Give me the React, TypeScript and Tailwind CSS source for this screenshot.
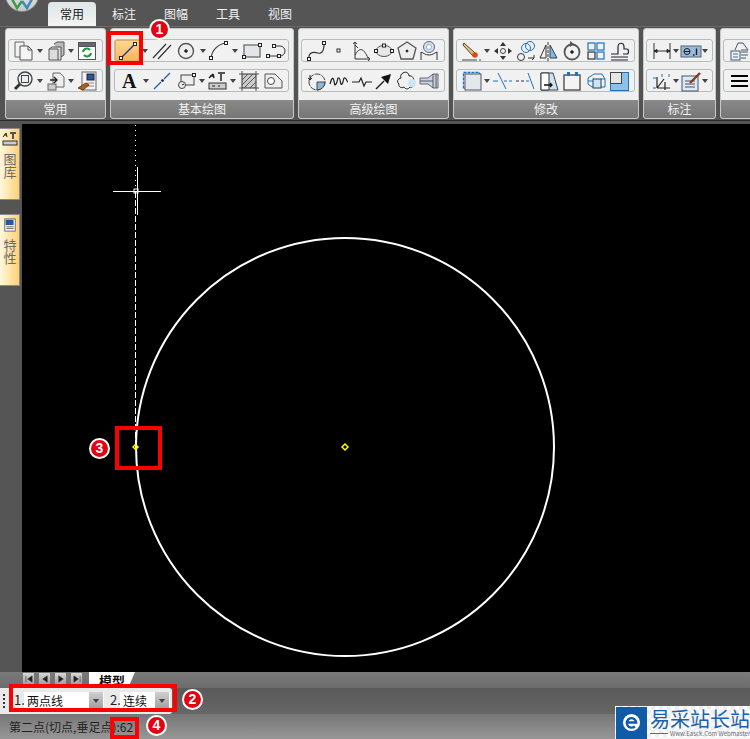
import React from "react";

const K = "#222";
const B = "#1a72c4";
type P = { children: React.ReactNode };
const I = ({ children }: P) => (
  <svg viewBox="0 0 22 22" className="w-[22px] h-[22px] shrink-0" fill="none" stroke={K} strokeWidth="1">
    {children}
  </svg>
);
const A = () => <span className="shrink-0 w-0 h-0 border-x-[3.5px] border-x-transparent border-t-[4px] border-t-[#444]" />;

const sq = (x: number, y: number, s = 3) => <rect x={x - s / 2} y={y - s / 2} width={s} height={s} fill="#fff" stroke={K} />;

const icons = {
  copyPages: <I><path d="M2 2h9v4M2 2v15h5" stroke="#666" /><path d="M7 6h8l4 4v10H7z" fill="#f4f4f4" stroke="#555" /><path d="M15 6v4h4" stroke="#555" /></I>,
  blocks: <I><path d="M9 4l3-2h7v13l-3 2" fill="#bbb" stroke="#555" /><path d="M4 9l3-2h9v13H4z" fill="#ddd" stroke="#555" /><path d="M4 9h9v11" stroke="#555" /></I>,
  refresh: <I><rect x="2.5" y="2.5" width="17" height="17" fill="#fff" stroke="#555" /><rect x="2.5" y="2.5" width="17" height="4" fill="#667" stroke="#555" /><path d="M7 12a4 4 0 017-2M15 13a4 4 0 01-7 2" stroke="#1a9a3a" strokeWidth="2" /></I>,
  zoom: <I><circle cx="12" cy="9" r="7" fill="#e8eef2" stroke="#444" strokeWidth="1.4" /><rect x="8.5" y="5.5" width="7" height="7" stroke="#444" /><path d="M7 14l-5 5" stroke="#333" strokeWidth="3" /></I>,
  paste: <I><path d="M8 3h7l4 4v10H8z" fill="#eee" stroke="#666" /><rect x="3" y="14" width="8" height="6" fill="#ccc" stroke="#666" /><path d="M5 10h7M9 7l3 3-3 3" stroke="#222" strokeWidth="1.4" /></I>,
  brush: <I><rect x="6" y="2" width="14" height="18" fill="#f2f2f2" stroke="#667" /><rect x="11" y="4" width="7" height="6" fill="#27579a" /><path d="M11 13h7M12 16h6" stroke="#888" /><path d="M2 18l8-5 3 2-6 5z" fill="#a8641e" stroke="#6b3b10" /></I>,
  line: <I><path d="M4 18L18 4" stroke="#1f3a8e" strokeWidth="1.500" />{sq(4, 18)}{sq(18, 4)}</I>,
  par: <I><path d="M2 18L15 4M7 19L20 5" stroke="#333" strokeWidth="1.2" /></I>,
  circle: <I><circle cx="11" cy="11" r="7.5" fill="#eee" stroke="#555" strokeWidth="1.4" /><circle cx="11" cy="11" r="1.3" fill="#333" /></I>,
  arc: <I><path d="M3 18C4 10 10 4 18 3" stroke="#444" strokeWidth="1.2" />{sq(3, 18)}{sq(18, 3)}</I>,
  rect: <I><rect x="3" y="5" width="16" height="12" fill="#e2e6ea" stroke="#444" />{sq(3, 17)}{sq(19, 5)}</I>,
  poly: <I><path d="M3 16h12a4.500 4.500 0 000-10h-6" stroke="#333" />{sq(3, 16)}{sq(14, 16)}{sq(9, 6)}</I>,
  text: <I><text x="3" y="18" fontFamily="Liberation Serif" fontWeight="700" fontSize="20" fill="#111" stroke="none">A</text></I>,
  dashline: <I><path d="M3 19l7-7M13 9l6-6" stroke="#1a60b0" strokeWidth="1.3" /><circle cx="11.500" cy="10.500" r="1.300" fill="#111" stroke="none" /></I>,
  insert: <I><rect x="6" y="5" width="13" height="10" fill="#eee" stroke="#444" /><circle cx="7" cy="15" r="3.500" fill="#eee" stroke="#444" /><path d="M7 15l2-1" />{sq(19, 5)}</I>,
  createblk: <I><path d="M3 8l4-4M7 4l1 4M4 6h4" strokeWidth="1.5" /><path d="M12 3h7M15 3v8" stroke="#555" strokeWidth="2" /><rect x="3" y="13" width="17" height="6" fill="#ccc" stroke="#333" /><path d="M6 16h3M12 16h2" /></I>,
  hatch: <I><rect x="4" y="4" width="14" height="14" fill="#ccc" stroke="#333" /><path d="M4 10l6-6M4 15L15 4M6 18L18 6M12 18l6-6M1 4h3M18 4h3M1 18h3M18 18h3M4 1v3M18 1v3M4 18v3M18 18v3" stroke="#555" /></I>,
  region: <I><path d="M3 4h10l7 7v7H3z" fill="#eee" stroke="#555" /><circle cx="9" cy="11" r="3.500" fill="#fff" stroke="#444" /></I>,
  spline: <I><path d="M3 19C2 11 9 12 12 13s6-1 6-9" stroke="#333" strokeWidth="1.2" />{sq(3, 19)}{sq(18, 3)}</I>,
  point: <I><rect x="9" y="9" width="3" height="3" stroke="#333" /></I>,
  axes: <I><path d="M4 19V2M2 4l2-2 2 2M4 19h15M17 17l2 2-2 2M4 5l3 3M4 15C9 6 13 9 17 18" stroke="#333" /></I>,
  ellipse: <I><ellipse cx="11" cy="11" rx="8" ry="5.500" fill="#e6e6e6" stroke="#555" />{sq(3, 11)}{sq(19, 11)}{sq(11, 5.500)}</I>,
  penta: <I><path d="M11 2l9 6-3 11H5L2 8z" fill="#eee" stroke="#555" strokeWidth="1.300" /><circle cx="11" cy="11" r="1" fill="#333" /></I>,
  globe: <I><circle cx="11" cy="7" r="5.500" fill="#cfe2f0" stroke="#667" /><circle cx="11" cy="7" r="2.500" fill="#fff" stroke="#9ac" /><path d="M3 20v-8c3 1 4 3 8 3s5-2 8-3v8" stroke="#333" /></I>,
  pie: <I><circle cx="11" cy="12" r="8" stroke="#444" strokeDasharray="6 1" /><path d="M11 12h8a8 8 0 01-8 8z" fill="#8ab8dc" stroke="#444" /><path d="M4 5v5M2 8l2 2 2-2" /></I>,
  wave: <I><path d="M2 14c2-7 3-7 4-3s0 5 2 3 1-7 3-6 1 8 3 6 1-7 3-6 2 4 3 4" stroke="#222" strokeWidth="1.200" /></I>,
  breakl: <I><path d="M1 12h7l2-4 3 8 2-4h6" stroke="#222" strokeWidth="1.200" /></I>,
  arrowp: <I><path d="M3 19l8-8" stroke="#222" strokeWidth="1.500" /><path d="M18 4l-3 10-7-7z" fill="#111" stroke="none" /></I>,
  cloud: <I><path d="M7 3c3-2 6 0 6 3 3-1 6 3 4 5 3 3 0 7-3 6-2 3-5 2-6 0-3 2-6-1-5-3-3-3-1-5 2-6-1-2 0-4 2-5z" stroke="#222" /><circle cx="16" cy="13" r="4" fill="#cfe6f5" stroke="none" /></I>,
  cyl: <I><path d="M2 8h8l5-4h5v14h-5l-5-4H2z" fill="#cbd5e0" stroke="#667" /><path d="M15 4v14M18 4v14M2 11h13" stroke="#556" /></I>,
  eraser: <I><path d="M3 3l11 10-2 3L2 5z" fill="#e3c48c" stroke="#5a4020" /><circle cx="14" cy="15" r="2.800" fill="#d0501a" stroke="none" /><path d="M1 20h15M18 20h2" stroke="#444" /></I>,
  move: <I><path d="M11 2l3 4H8zM11 20l3-4H8zM2 11l4-3v6zM20 11l-4-3v6z" fill="#333" stroke="none" /><circle cx="11" cy="11" r="2.500" stroke="#444" /></I>,
  copyc: <I><circle cx="15" cy="6" r="4.500" stroke={B} /><circle cx="11" cy="8" r="4.500" stroke={B} /><circle cx="6" cy="17" r="3.500" stroke="#333" /><path d="M13 18h6v-3M17 20l2-2" stroke="#333" /></I>,
  mirror: <I><path d="M2 18L8 5v13z" stroke="#333" /><path d="M12 5l7 13h-7z" fill="#8ab8dc" stroke="#245" /><path d="M10 2v19" stroke="#333" strokeDasharray="3 1" /></I>,
  rotate: <I><circle cx="11" cy="12" r="7.500" stroke="#555" strokeWidth="1.800" /><circle cx="11" cy="12" r="1.300" fill="#222" /><path d="M9 1l4 3-4 3z" fill="#555" stroke="none" /></I>,
  array: <I><g stroke={B} strokeWidth="1.200"><rect x="3" y="3" width="7" height="7" /><rect x="12" y="3" width="7" height="7" /></g><g stroke="#333" strokeWidth="1.200"><rect x="3" y="12" width="7" height="7" /><rect x="12" y="12" width="7" height="7" stroke={B} /></g></I>,
  stamp: <I><path d="M3 14h7V7c0-5 6-5 6 0v2h3c2 0 2 5 0 5h-4M3 17h17M3 20h17" stroke="#223" strokeWidth="1.200" /></I>,
  offsetr: <I><rect x="2.500" y="2.500" width="16" height="16" stroke={B} strokeWidth="1.300" strokeDasharray="3 1" /><rect x="4" y="4" width="16" height="16" fill="#e4e8ec" stroke="#556" /></I>,
  trim: <I><path d="M1 11h5M12 11h3M17 11h3" stroke={B} /><path d="M6 3l8 16" stroke={B} /></I>,
  extend: <I><path d="M1 11h3M6 11h3" stroke="#333" /><path d="M11 11h3" stroke={B} /><path d="M13 3l6 16" stroke={B} /></I>,
  stretch: <I><path d="M3 3h12l5 17H3z" fill="#cfe2f2" stroke="#345" /><path d="M3 3h8v17H3z" fill="#fff" stroke="#333" /><path d="M6 15h8M12 13l2 2-2 2" stroke="#111" strokeWidth="1.300" /></I>,
  topdots: <I><rect x="3" y="5" width="16" height="15" fill="#f4f4f4" stroke="#444" strokeWidth="1.300" /><rect x="6" y="2" width="3" height="4" fill={B} stroke="none" /><rect x="14" y="2" width="3" height="4" fill={B} stroke="none" /></I>,
  box3d: <I><path d="M3 8l6-4h8l3 5v8H7L3 14z" stroke={B} /><rect x="8" y="9" width="8" height="9" fill="#cfe2f2" stroke="#245" /><path d="M3 11h5M16 9h4" stroke={B} /></I>,
  offsets: <I><rect x="2.500" y="2.500" width="18" height="18" fill="#8fc0e6" stroke={B} /><rect x="2.500" y="2.500" width="11" height="11" fill="#e6e6e6" stroke="#444" /></I>,
  dim: <I><path d="M3 3v16M19 3v16M3 11h16" stroke="#333" /><path d="M3 11l3-1.500v3zM19 11l-3-1.500v3z" fill="#333" /></I>,
  dimval: <I><rect x="1" y="6" width="20" height="11" fill="#9db8d4" stroke="#567" /><circle cx="7" cy="11.500" r="3" stroke="#123" /><path d="M4 11.500h6" stroke="#123" /><path d="M13 15h1.500M16.500 8.500V15" stroke="#123" strokeWidth="1.400" /></I>,
  ordin: <I><path d="M6 18h13M6 18V7M6 18l7-9M14 12v8" stroke="#222" strokeWidth="1.200" /><path d="M2 8h3M2 18h3M11 4v3M18 4v3" stroke={B} /></I>,
  note: <I><rect x="2" y="6" width="16" height="15" fill="#dfe8f2" stroke="#456" /><path d="M5 11h10M5 14h10M5 17h10" stroke="#456" /><path d="M10 13L20 3" stroke="#8a3a16" strokeWidth="2.400" /></I>,
  layers: <I><rect x="3" y="11" width="9" height="9" fill="#f4f4f4" stroke="#456" /><path d="M5 14h5M5 17h5" stroke={B} /><path d="M7 10l3-7h5l5 7h-7" stroke="#456" /><path d="M13 12h7M13 15h7M13 18h5" stroke="#456" /></I>,
  lines: <I><path d="M3 6h17M3 11h17M3 16h17" stroke="#000" strokeWidth="2.200" /></I>,
};

const Group = ({ children, hot }: P & { hot?: boolean }) => (
  <div className={`h-[23px] flex items-center justify-between border border-[#b5bcbc] rounded-[3px] bg-[#f1f1f1] ${hot ? "pl-0 pr-[1px]" : "px-[4px]"}`}>{children}</div>
);

const Panel = ({ w, label, rows }: { w: string; label: string; rows: React.ReactNode[] }) => (
  <section className={`${w} shrink-0 h-[91px] flex flex-col bg-[#efefef] border border-[#c8c8c8] rounded-[3px] overflow-hidden`}>
    <div className="flex-1 flex flex-col pt-[10px] gap-[7px] px-[2px]">{rows}</div>
    <div className="h-[18px] bg-gradient-to-b from-[#8a8a8a] to-[#767676] text-[12px] leading-[18px] text-center text-[#f2f2f2]">{label}</div>
  </section>
);

const Hot = () => (
  <div className="w-[25px] h-[21px] flex items-center justify-center bg-gradient-to-b from-[#ffd890] to-[#fbb45c] border border-[#e0b060] shrink-0">{icons.line}</div>
);

const Badge = ({ n, c }: { n: string; c: string }) => (
  <div className={`absolute ${c} w-[21px] h-[21px] rounded-full bg-[#e60012] border-[2px] border-white text-white text-[14px] font-bold leading-[17px] text-center font-['Liberation_Sans',sans-serif]`}>{n}</div>
);

const NavBtn = ({ d }: { d: string }) => (
  <div className="w-[13px] h-[13px] bg-gradient-to-b from-[#d8d8d8] to-[#a0a0a0] border border-[#777] flex items-center justify-center">
    <svg viewBox="0 0 9 9" className="w-[8px] h-[8px]"><path d={d} fill="#222" stroke="#222" strokeWidth=".6" /></svg>
  </div>
);

const Sel = ({ t, w }: { t: string; w: string }) => (
  <div className={`${w} h-[18px] bg-white flex items-center justify-between pr-[1px]`}>
    <span className="pl-[3px] text-[12px] text-[#111]">{t}</span>
    <span className="w-[14px] h-[18px] bg-gradient-to-b from-[#d0d0d0] to-[#9c9c9c] flex items-center justify-center">
      <span className="w-0 h-0 border-x-[3.500px] border-x-transparent border-t-[4px] border-t-[#444]" />
    </span>
  </div>
);

const Side = ({ label, icon, mt }: { label: string; icon: React.ReactNode; mt: string }) => (
  <div className={`${mt} w-[20px] h-[72px] border border-[#8a8a8a] border-l-0 bg-gradient-to-r from-[#fff8dc] to-[#ffd070] flex flex-col items-center pt-[2px] gap-[6px]`}>
    {icon}
    <span className="[writing-mode:vertical-rl] text-[13px] leading-[14px] text-[#6b6b6b]">{label}</span>
  </div>
);

export default function App() {
  return (
    <div className="relative w-[750px] h-[739px] overflow-hidden flex flex-col bg-[#555] font-['Noto_Sans_CJK_SC','Liberation_Sans',sans-serif]">
      {/* Tabs */}
      <header className="h-[26px] shrink-0 bg-[#555] flex items-end relative">
        <div className="absolute left-[5px] -top-[22px] w-[34px] h-[34px] rounded-full bg-gradient-to-b from-[#f4f4f4] to-[#c8c8c8] border border-[#888] flex items-end justify-center overflow-hidden">
          <svg viewBox="0 0 24 12" className="w-[24px] h-[12px] mb-[1px]">
            <path d="M2 1l5 9 5-7" fill="none" stroke="#3a9a4a" strokeWidth="2.500" />
            <path d="M12 3l5 7 5-9" fill="none" stroke="#3a8ac0" strokeWidth="2.500" />
          </svg>
        </div>
        <div className="ml-[48px] w-[48px] h-[24px] rounded-t-[4px] bg-gradient-to-b from-[#dfe6e8] to-[#f3f3f3] text-[12px] leading-[24px] text-center text-[#222]">常用</div>
        <nav className="flex ml-[16px] gap-[28px] h-[24px] text-[12px] leading-[24px] text-[#f0f0f0]">
          <span>标注</span><span>图幅</span><span>工具</span><span>视图</span>
        </nav>
      </header>

      {/* Ribbon */}
      <div className="h-[94px] shrink-0 bg-[#535353] border-t border-[#6a6a6a] flex gap-[4px] pl-[5px] pt-[1px]">
        <Panel w="w-[101px]" label="常用" rows={[
          <Group key="a">{icons.copyPages}<A />{icons.blocks}<A />{icons.refresh}</Group>,
          <Group key="b">{icons.zoom}<A />{icons.paste}<A />{icons.brush}</Group>,
        ]} />
        <Panel w="w-[184px]" label="基本绘图" rows={[
          <div key="a" className="pl-[1px] pr-[2px]"><Group hot><Hot /><A />{icons.par}{icons.circle}<A />{icons.arc}<A />{icons.rect}{icons.poly}</Group></div>,
          <div key="b" className="pl-[1px] pr-[2px]"><Group>{icons.text}<A />{icons.dashline}{icons.insert}<A />{icons.createblk}<A />{icons.hatch}{icons.region}</Group></div>,
        ]} />
        <Panel w="w-[151px]" label="高级绘图" rows={[
          <div key="a" className="pr-[1px]"><Group>{icons.spline}{icons.point}{icons.axes}{icons.ellipse}{icons.penta}{icons.globe}</Group></div>,
          <div key="b" className="pr-[1px]"><Group>{icons.pie}{icons.wave}{icons.breakl}{icons.arrowp}{icons.cloud}{icons.cyl}</Group></div>,
        ]} />
        <Panel w="w-[186px]" label="修改" rows={[
          <div key="a" className="pr-[1px]"><Group>{icons.eraser}<A />{icons.move}{icons.copyc}{icons.mirror}{icons.rotate}{icons.array}{icons.stamp}</Group></div>,
          <div key="b" className="pr-[1px]"><Group>{icons.offsetr}<A />{icons.trim}{icons.extend}{icons.stretch}{icons.topdots}{icons.box3d}{icons.offsets}</Group></div>,
        ]} />
        <Panel w="w-[73px]" label="标注" rows={[
          <Group key="a">{icons.dim}<A />{icons.dimval}<A /></Group>,
          <Group key="b">{icons.ordin}<A />{icons.note}<A /></Group>,
        ]} />
        <section className="w-[40px] shrink-0 h-[91px] flex flex-col bg-[#efefef] border border-[#c8c8c8] rounded-[3px] overflow-hidden">
          <div className="flex-1 flex flex-col pt-[10px] gap-[7px] pl-[2px]">
            <Group>{icons.layers}</Group>
            <Group>{icons.lines}</Group>
          </div>
          <div className="h-[18px] bg-gradient-to-b from-[#8a8a8a] to-[#767676]" />
        </section>
      </div>

      {/* Work area */}
      <main className="h-[552px] shrink-0 flex border-t border-[#2a2a2a] pt-[3px] bg-[#555]">
        <aside className="w-[22px] shrink-0 flex flex-col">
          <Side mt="mt-[4px]" label="图库" icon={
            <svg viewBox="0 0 16 16" className="w-[16px] h-[16px] shrink-0"><path d="M1 6l3-4M4 2l1 4M2 4h3" stroke="#222" fill="none" /><path d="M8 2h6M11 2v6" stroke="#555" strokeWidth="2" /><rect x="1" y="10" width="14" height="4" fill="#ccc" stroke="#333" /></svg>
          } />
          <Side mt="mt-[14px]" label="特性" icon={
            <svg viewBox="0 0 16 16" className="w-[14px] h-[16px] shrink-0"><rect x="2" y="1" width="12" height="14" fill="#eee" stroke="#667" /><rect x="3" y="2" width="9" height="6" fill="#27579a" /><path d="M4 10h8M4 12h8" stroke="#666" /></svg>
          } />
        </aside>
        <div className="flex-1 bg-black">
          <svg viewBox="22 124 728 548" className="block w-full h-full">
            <circle cx="345" cy="447" r="209" fill="none" stroke="#fff" strokeWidth="2" />
            <path d="M135.500 125V190" stroke="#fff" strokeDasharray="1 4" />
            <path d="M135.500 192V447" stroke="#fff" strokeDasharray="6 2" strokeWidth="1" />
            <path d="M113 191.500H161M137.500 167V215" stroke="#fff" />
            <rect x="134" y="189" width="4" height="4" fill="none" stroke="#fff" />
            <path d="M133 447l2.500-2.500 2.500 2.500-2.500 2.500z" fill="none" stroke="#ff0" strokeWidth="1.500" />
            <path d="M342 447l3-3 3 3-3 3z" fill="none" stroke="#ff0" strokeWidth="1.500" />
          </svg>
        </div>
      </main>

      {/* Model tabs */}
      <div className="h-[16px] shrink-0 bg-gradient-to-b from-[#7a7a7a] to-[#6c6c6c] flex items-start overflow-hidden pl-[22px]">
        <div className="flex gap-[3px]">
          <NavBtn d="M1 1v7M8 1L3 4.500 8 8z" />
          <NavBtn d="M7 1L2 4.500 7 8z" />
          <NavBtn d="M2 1l5 3.500L2 8z" />
          <NavBtn d="M8 1v7M1 1l5 3.500L1 8z" />
        </div>
        <div className="ml-[6px] w-[46px] h-[16px] bg-white [clip-path:polygon(0_0,100%_0,85%_100%,0_100%)] text-[13px] font-bold leading-[18px] text-[#111] pl-[10px]">模型</div>
      </div>

      {/* Options */}
      <div className="h-[26px] shrink-0 bg-gradient-to-b from-[#5a5a5a] to-[#666] flex items-center">
        <div className="w-[172px] h-[26px] bg-[#eaeaea] rounded-r-[3px] flex items-center pl-[3px] text-[13px] text-[#222]">
          <span className="w-[3px] h-[14px] border-l-[2px] border-dotted border-[#333] mr-[8px]" />
          <span className="w-[10px] leading-[13px] -mt-[4px]">1.</span>
          <Sel t="两点线" w="w-[80px]" />
          <span className="ml-[6px] w-[10px] leading-[13px] -mt-[4px]">2.</span>
          <Sel t="连续" w="w-[50px]" />
        </div>
      </div>

      {/* Status */}
      <footer className="flex-1 bg-gradient-to-b from-[#767676] to-[#979797] flex items-center pl-[9px] text-[12px] text-[#222]">
        第二点(切点,垂足点):62
      </footer>

      {/* Annotations */}
      <div className="absolute left-[107px] top-[31px] w-[36px] h-[34px] border-[4px] border-[#f00]" />
      <div className="absolute left-[9px] top-[684px] w-[168px] h-[28px] border-[4px] border-[#f00]" />
      <div className="absolute left-[115px] top-[426px] w-[47px] h-[44px] border-[4px] border-[#f00]" />
      <div className="absolute left-[110px] top-[717px] w-[29px] h-[22px] border-[4px] border-[#f00]" />
      <Badge n="1" c="left-[149px] top-[19px]" />
      <Badge n="2" c="left-[182px] top-[689px]" />
      <Badge n="3" c="left-[89px] top-[438px]" />
      <Badge n="4" c="left-[146px] top-[715px]" />

      {/* Watermark */}
      <div className="absolute left-[615px] top-[706px] w-[135px] h-[33px] bg-[repeating-conic-gradient(#eeeeee_0_25%,#ffffff_0_50%)] bg-[length:8px_8px] flex items-center overflow-hidden">
        <div className="w-[31px] h-[32px] ml-[1px] bg-[#0f5ba7] flex items-center justify-center shrink-0">
          <svg viewBox="0 0 20 20" className="w-[19px] h-[19px]"><circle cx="10" cy="10" r="9" fill="#fff" /><path d="M4 10h11a5 5 0 10-1.500 4" fill="none" stroke="#0f5ba7" strokeWidth="2.500" /></svg>
        </div>
        <div className="ml-[3px] flex flex-col min-w-0">
          <span className="text-[20px] leading-[22px] text-[#1a62ad] whitespace-nowrap">易采站长站</span>
          <div className="flex items-center gap-[2px]">
            <span className="w-[18px] h-px bg-[#667] shrink-0" />
            <span className="text-[6px] leading-[8px] text-[#667] whitespace-nowrap">Www.Easck.Com Webmaster</span>
          </div>
        </div>
      </div>
    </div>
  );
}
